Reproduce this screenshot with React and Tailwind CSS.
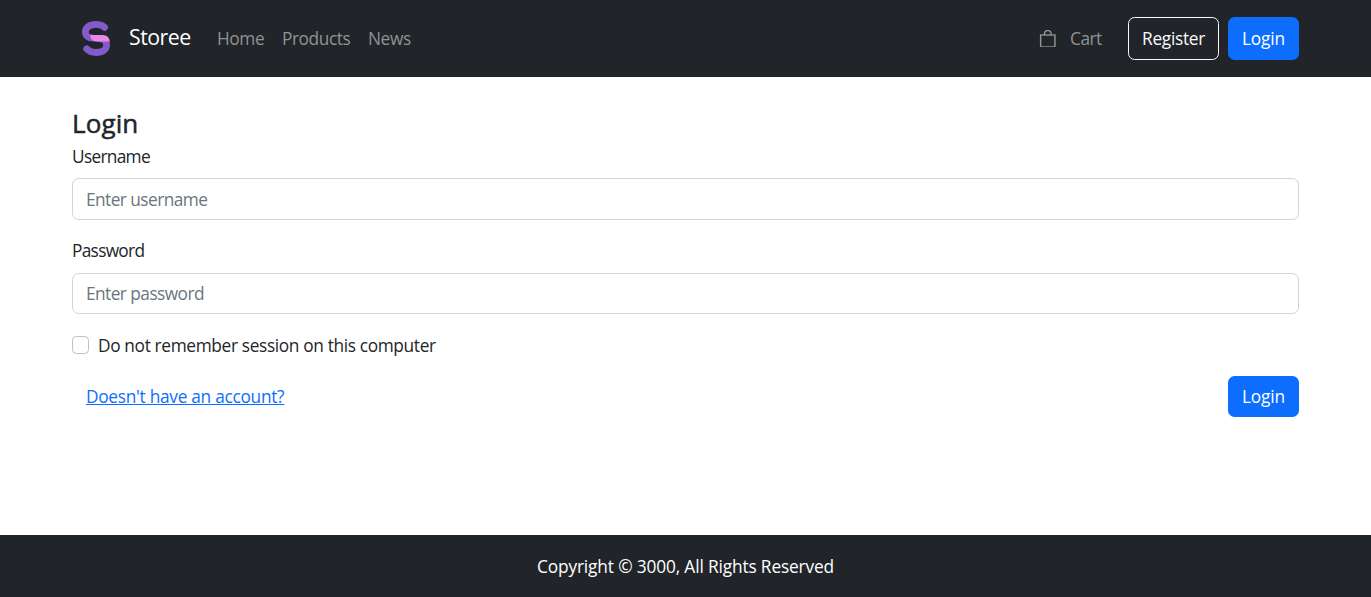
import { BsBag } from "react-icons/bs";

function Logo() {
  return (
    <svg className="h-[35px] w-7 shrink-0" viewBox="0 0 28 35" fill="none">
      <path
        d="M22.6 6.4C20.6 4.4 17.6 3.4 13.8 3.4C7.6 3.4 3.4 6.7 3.4 11C3.4 14.6 6 17.2 11 17.2"
        stroke="#845acb"
        strokeWidth="6.8"
        strokeLinecap="round"
      />
      <path
        d="M4.7 27.8C7 30.4 10 31.5 14 31.5C20.4 31.5 24.6 28.4 24.6 24C24.6 20.4 22 17.8 17 17.6"
        stroke="#845acb"
        strokeWidth="6.8"
        strokeLinecap="round"
      />
      <path d="M8 14H20.5C25 14 27.3 16.8 27.9 20.6H14.5C11 20.6 8.2 17.7 8 14Z" fill="#ea86e4" />
    </svg>
  );
}

function Field({ id, label, type, placeholder, className, inputClassName }) {
  return (
    <div className={className}>
      <label htmlFor={id} className="block h-[26px] leading-[26px] tracking-[-0.7px]">
        {label}
      </label>
      <input
        id={id}
        type={type}
        placeholder={placeholder}
        className={`block w-full rounded-[6.6px] border border-[#ced4da] bg-white px-[13px] tracking-[-0.55px] placeholder:text-[#6c757d] ${inputClassName}`}
      />
    </div>
  );
}

export default function App() {
  return (
    <div className="flex h-[597px] flex-col bg-white font-['Open_Sans','Noto_Sans',sans-serif] text-[17.3px] leading-[26px] text-[#212529]">
      <header className="flex h-[77px] shrink-0 items-center bg-[#212529] pr-[72px] pl-[82px]">
        <Logo />
        <a href="#" className="mb-[3px] ml-[19px] w-[62px] whitespace-nowrap text-[21.3px] tracking-[-0.5px] text-white">
          Storee
        </a>
        <nav className="ml-[26px] flex grow whitespace-nowrap text-[#909294]">
          <a href="#" className="w-[65px] tracking-[-0.4px]">Home</a>
          <a href="#" className="w-[86px] tracking-[-0.43px]">Products</a>
          <a href="#" className="tracking-[-0.4px]">News</a>
        </nav>
        <a href="#" className="flex items-center text-[#a0a2a4]">
          <BsBag className="size-[17.6px]" strokeWidth="0.2" />
          <span className="ml-[13px] w-8 tracking-[-0.5px] text-[#909294]">Cart</span>
        </a>
        <button className="ml-[26px] h-[43px] w-[91px] rounded-[6.6px] border border-[#f8f9fa] tracking-[-0.3px] text-[#f8f9fa]">
          Register
        </button>
        <button className="ml-[9px] h-[43px] w-[71px] rounded-[6.6px] bg-[#0d6efd] tracking-[-0.15px] text-white">
          Login
        </button>
      </header>

      <main className="grow px-[72px] pt-[30px]">
        <h1 className="h-[37px] text-[26px] leading-[32px] tracking-[0.1px] [-webkit-text-stroke:0.5px_#212529]">Login</h1>
        <form>
          <Field
            id="username"
            label="Username"
            type="text"
            placeholder="Enter username"
            inputClassName="mt-[8px] h-[42px]"
          />
          <Field
            id="password"
            label="Password"
            type="password"
            placeholder="Enter password"
            className="mt-[18px]"
            inputClassName="mt-[9px] h-[41px]"
          />
          <label className="mt-[19px] flex h-[26px] items-center">
            <input
              type="checkbox"
              className="mr-[9px] mb-[2px] h-[18px] w-[17px] appearance-none rounded-[4.4px] border border-[#bfbfbf] bg-white"
            />
            <span className="tracking-[-0.35px]">Do not remember session on this computer</span>
          </label>
          <div className="mt-[17px] flex h-[41px] items-center justify-between">
            <a href="#" className="ml-[14px] tracking-[-0.28px] text-[#0d6efd] underline">
              Doesn't have an account?
            </a>
            <button type="button" className="h-[41px] w-[71px] rounded-[6.6px] bg-[#0d6efd] tracking-[-0.15px] text-white">
              Login
            </button>
          </div>
        </form>
      </main>

      <footer className="flex h-[62px] shrink-0 items-center justify-center bg-[#212529] pt-[2px] text-white">
        <span className="tracking-[-0.14px]">Copyright © 3000, All Rights Reserved</span>
      </footer>
    </div>
  );
}
